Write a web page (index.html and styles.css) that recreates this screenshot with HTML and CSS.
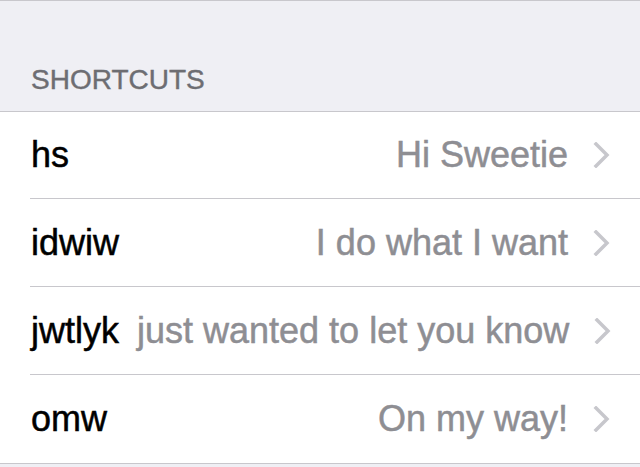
FILE: index.html
```html
<!DOCTYPE html>
<html lang="en">
<head>
  <meta charset="UTF-8">
  <title>Shortcuts</title>
  <meta name="viewport" content="width=device-width, initial-scale=1">
  <link rel="stylesheet" href="styles.css">
</head>
<body>
  <div class="screen">
    <div class="section-header">Shortcuts</div>
    <ul class="list">
      <li class="row">
        <div class="row-inner">
          <span class="phrase">hs</span>
          <span class="expansion">Hi Sweetie</span>
          <svg class="chevron" width="17" height="26" viewBox="0 0 17 26"><polyline points="3,2 14,13 3,24" /></svg>
        </div>
      </li>
      <li class="row">
        <div class="row-inner">
          <span class="phrase">idwiw</span>
          <span class="expansion">I do what I want</span>
          <svg class="chevron" width="17" height="26" viewBox="0 0 17 26"><polyline points="3,2 14,13 3,24" /></svg>
        </div>
      </li>
      <li class="row">
        <div class="row-inner">
          <span class="phrase">jwtlyk</span>
          <span class="expansion">just wanted to let you know</span>
          <svg class="chevron" width="17" height="26" viewBox="0 0 17 26"><polyline points="3,2 14,13 3,24" /></svg>
        </div>
      </li>
      <li class="row">
        <div class="row-inner">
          <span class="phrase">omw</span>
          <span class="expansion">On my way!</span>
          <svg class="chevron" width="17" height="26" viewBox="0 0 17 26"><polyline points="3,2 14,13 3,24" /></svg>
        </div>
      </li>
    </ul>
  </div>
</body>
</html>
```

FILE: styles.css
```css
:root {
  --background: #efeff4;
  --separator: #c8c7cc;
  --header-text: #6d6d72;
  --detail-text: #8e8e93;
  --chevron: #c7c7cc;
}
body {
  margin: 0;
  padding: 0;
  background: var(--background);
  font-family: 'Liberation Sans', Arial, sans-serif;
}
.screen {
  border-top: 1px solid var(--separator);
}
.section-header {
  height: 110px;
  box-sizing: border-box;
  padding: 0 31px 15px;
  display: flex;
  align-items: flex-end;
  text-transform: uppercase;
  font-size: 28px;
  color: var(--header-text);
  -webkit-text-stroke: 0.4px var(--header-text);
}
.list {
  list-style: none;
  margin: 0;
  padding: 0;
  background: #fff;
  border-top: 1px solid var(--separator);
  border-bottom: 1px solid var(--separator);
}
.row {
  padding-left: 30px;
}
.row-inner {
  height: 87px;
  display: flex;
  align-items: center;
  padding: 0 30px 0 1px;
  border-bottom: 1px solid var(--separator);
  font-size: 36px;
}
.row:first-child .row-inner {
  height: 86px;
}
.row:last-child .row-inner {
  border-bottom: none;
  height: 88px;
}
.phrase {
  color: #000;
  margin-right: 18px;
  -webkit-text-stroke: 0.5px #000;
}
.expansion {
  margin-left: auto;
  color: var(--detail-text);
  white-space: nowrap;
  -webkit-text-stroke: 0.5px var(--detail-text);
}
.chevron {
  margin-left: 25px;
  flex-shrink: 0;
}
.chevron polyline {
  fill: none;
  stroke: var(--chevron);
  stroke-width: 3.5;
  stroke-linecap: square;
}
```
